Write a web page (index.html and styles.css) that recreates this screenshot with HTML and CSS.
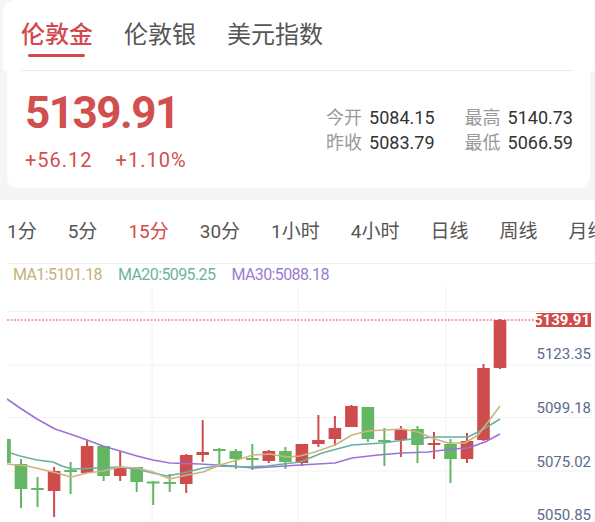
FILE: index.html
```html
<!DOCTYPE html>
<html lang="zh-CN">
<head>
    <meta charset="UTF-8">
    <meta name="viewport" content="width=device-width, initial-scale=1.0">
    <title>伦敦金行情</title>
    <link rel="stylesheet" href="styles.css">
</head>
<body>
    <nav class="market-tabs">
        <div class="market-tabs-inner">
            <a class="market-tab active">伦敦金</a>
            <a class="market-tab">伦敦银</a>
            <a class="market-tab">美元指数</a>
        </div>
    </nav>

    <section class="quote-card">
        <div class="quote-main">
            <div class="price">5139.91</div>
            <div class="change">
                <span>+56.12</span>
                <span>+1.10%</span>
            </div>
        </div>
        <div class="quote-stats">
            <div class="stat"><span class="stat-label">今开</span><span class="stat-value">5084.15</span></div>
            <div class="stat"><span class="stat-label">最高</span><span class="stat-value">5140.73</span></div>
            <div class="stat"><span class="stat-label">昨收</span><span class="stat-value">5083.79</span></div>
            <div class="stat"><span class="stat-label">最低</span><span class="stat-value">5066.59</span></div>
        </div>
    </section>

    <section class="chart-panel">
        <div class="period-tabs">
            <span class="period">1分</span>
            <span class="period">5分</span>
            <span class="period active">15分</span>
            <span class="period">30分</span>
            <span class="period">1小时</span>
            <span class="period">4小时</span>
            <span class="period">日线</span>
            <span class="period">周线</span>
            <span class="period">月线</span>
        </div>
        <div class="ma-legend">
            <span class="ma1">MA1:5101.18</span>
            <span class="ma20">MA20:5095.25</span>
            <span class="ma30">MA30:5088.18</span>
        </div>

        <svg class="kline" width="595" height="237" viewBox="0 285 595 237">
            <defs>
                <clipPath id="plot">
                    <rect x="7" y="285" width="588" height="237"/>
                </clipPath>
            </defs>

            <!-- grid -->
            <g class="grid">
                <line x1="152" y1="285" x2="152" y2="522"/>
                <line x1="298" y1="285" x2="298" y2="522"/>
                <line x1="446" y1="285" x2="446" y2="522"/>
                <line x1="7" y1="311.5" x2="592" y2="311.5"/>
                <line x1="7" y1="365" x2="592" y2="365"/>
                <line x1="7" y1="417.5" x2="592" y2="417.5"/>
                <line x1="7" y1="471" x2="592" y2="471"/>
            </g>

            <!-- candles: wick line + body rect -->
            <g clip-path="url(#plot)">
                <g class="down">
                    <rect x="-1.8" y="439" width="12.6" height="24"/>
                    <line x1="21" y1="459" x2="21" y2="508"/><rect x="14.7" y="464" width="12.6" height="25"/>
                    <line x1="37.5" y1="477" x2="37.5" y2="507"/><rect x="31.2" y="488" width="12.6" height="2"/>
                    <line x1="70.6" y1="462" x2="70.6" y2="494"/><rect x="64.3" y="470" width="12.6" height="2"/>
                    <line x1="103.6" y1="446" x2="103.6" y2="481"/><rect x="97.3" y="446" width="12.6" height="30"/>
                    <line x1="136.7" y1="467" x2="136.7" y2="492"/><rect x="130.4" y="467" width="12.6" height="15"/>
                    <line x1="153.2" y1="481" x2="153.2" y2="505"/><rect x="146.9" y="481.5" width="12.6" height="2"/>
                    <line x1="169.7" y1="474" x2="169.7" y2="492"/><rect x="163.4" y="482" width="12.6" height="2"/>
                    <line x1="219.3" y1="448" x2="219.3" y2="464"/><rect x="213" y="449" width="12.6" height="2"/>
                    <line x1="235.8" y1="449" x2="235.8" y2="469"/><rect x="229.5" y="451" width="12.6" height="8"/>
                    <line x1="252.3" y1="444" x2="252.3" y2="470"/><rect x="246" y="458" width="12.6" height="2"/>
                    <line x1="285.4" y1="447" x2="285.4" y2="469"/><rect x="279.1" y="451" width="12.6" height="11"/>
                    <line x1="367.9" y1="407" x2="367.9" y2="442"/><rect x="361.6" y="407" width="12.6" height="32"/>
                    <line x1="384.4" y1="428" x2="384.4" y2="466"/><rect x="378.1" y="440" width="12.6" height="2"/>
                    <line x1="417.5" y1="426" x2="417.5" y2="463"/><rect x="411.2" y="429" width="12.6" height="16"/>
                    <line x1="450.5" y1="439" x2="450.5" y2="483"/><rect x="444.2" y="444" width="12.6" height="15"/>
                </g>
                <g class="up">
                    <line x1="54.1" y1="467" x2="54.1" y2="517"/><rect x="47.8" y="471" width="12.6" height="20"/>
                    <line x1="87.1" y1="440" x2="87.1" y2="473"/><rect x="80.8" y="446" width="12.6" height="27"/>
                    <line x1="120.2" y1="451" x2="120.2" y2="481"/><rect x="113.9" y="467" width="12.6" height="9"/>
                    <line x1="186.2" y1="454" x2="186.2" y2="493"/><rect x="179.9" y="455" width="12.6" height="29"/>
                    <line x1="202.7" y1="420" x2="202.7" y2="462"/><rect x="196.4" y="452" width="12.6" height="3"/>
                    <line x1="268.8" y1="450" x2="268.8" y2="463"/><rect x="262.5" y="451" width="12.6" height="10"/>
                    <line x1="301.9" y1="444" x2="301.9" y2="466"/><rect x="295.6" y="444" width="12.6" height="19"/>
                    <line x1="318.4" y1="415" x2="318.4" y2="447"/><rect x="312.1" y="440" width="12.6" height="4"/>
                    <line x1="334.9" y1="416" x2="334.9" y2="446"/><rect x="328.6" y="428" width="12.6" height="11"/>
                    <line x1="351.4" y1="405" x2="351.4" y2="427"/><rect x="345.1" y="406" width="12.6" height="21"/>
                    <line x1="400.9" y1="426" x2="400.9" y2="457"/><rect x="394.6" y="430" width="12.6" height="10"/>
                    <line x1="434" y1="432" x2="434" y2="459"/><rect x="427.7" y="443" width="12.6" height="2"/>
                    <line x1="467" y1="433" x2="467" y2="463"/><rect x="460.7" y="441" width="12.6" height="18"/>
                    <line x1="483.5" y1="364" x2="483.5" y2="441"/><rect x="477.2" y="368" width="12.6" height="72"/>
                    <line x1="500" y1="319" x2="500" y2="369"/><rect x="493.7" y="320" width="12.6" height="48"/>
                </g>

                <!-- moving averages -->
                <polyline class="line-ma30" points="7,399 20,408 37,419 55,429 70,434 87,440 103,446 120,451 137,456 153,460 170,463 200,464 233,466 253,468 270,467 300,465 335,463 352,458 378,455 402,453 428,452 452,449 468,448 485,442 500,434"/>
                <polyline class="line-ma20" points="7,452 20,456 37,460 53,462 62,466 72,469 100,468 120,467 140,470 153,473 167,476 183,473 203,468 220,466 247,467 267,466 300,462 322,453 352,445 382,443 412,439 435,437 468,437 482,430 500,419"/>
                <polyline class="line-ma1" points="7,464 27,466 53,472 71,477 87,473 103,471 120,467 137,468 153,472 170,479 187,475 203,472 220,465 237,460 253,455 270,454 287,457 300,456 315,452 335,445 352,435 368,431 385,430 402,429 418,432 432,438 448,443 465,443 478,435 488,422 500,406"/>
            </g>

            <!-- last price -->
            <line class="last-line" x1="7" y1="320" x2="536" y2="320"/>
            <rect class="last-badge" x="536" y="313" width="55" height="14"/>
            <text class="last-text" x="590" y="325">5139.91</text>

            <g class="axis">
                <text x="591" y="359">5123.35</text>
                <text x="591" y="413">5099.18</text>
                <text x="591" y="467">5075.02</text>
                <text x="591" y="520">5050.85</text>
            </g>
        </svg>
    </section>
</body>
</html>
```

FILE: styles.css
```css
body {
    margin: 0;
    width: 595px;
    height: 522px;
    overflow: hidden;
    background-color: #f5f5f5;
    font-family: Roboto, "Noto Sans CJK SC", sans-serif;
    color: #333;
}

/* market switcher */
.market-tabs {
    background: #fff;
    margin-left: 3px;
    height: 71px;
    border-top-left-radius: 12px;
}
.market-tabs-inner {
    display: flex;
    gap: 31px;
    height: 70px;
    margin: 0 22px 0 18px;
    border-bottom: 1px solid #ebebeb;
}
.market-tab {
    position: relative;
    padding-top: 19px;
    font-size: 24px;
    line-height: 32px;
    color: #555;
}
.market-tab.active {
    color: #d4494c;
    font-weight: 500;
}
.market-tab.active::after {
    content: "";
    position: absolute;
    top: 54px;
    left: 50%;
    width: 57px;
    height: 3px;
    margin-left: -29px;
    border-radius: 2px;
    background: #d4494c;
}

/* quote card */
.quote-card {
    display: flex;
    justify-content: space-between;
    align-items: center;
    height: 117px;
    margin: 0 5px 0 7px;
    padding: 0 17px 0 18px;
    box-sizing: border-box;
    background: #fff;
    border-radius: 0 0 12px 12px;
}
.price {
    font-size: 44px;
    font-weight: 700;
    line-height: 52px;
    letter-spacing: -1.5px;
    color: #d14f4f;
}
.change {
    display: flex;
    gap: 23px;
    margin-top: 9px;
    font-size: 20px;
    line-height: 24px;
    letter-spacing: 1px;
    color: #d14f4f;
}
.quote-stats {
    display: grid;
    grid-template-columns: auto auto;
    column-gap: 30px;
    font-size: 18px;
    line-height: 25px;
}
.stat-label {
    color: #999;
    margin-right: 7px;
}
.stat-value {
    color: #333;
}

/* chart panel */
.chart-panel {
    margin-top: 12px;
    height: 322px;
    background: #fff;
}
.period-tabs {
    display: flex;
    align-items: center;
    gap: 31px;
    height: 64px;
    padding-bottom: 5px;
    box-sizing: border-box;
    margin-left: 7px;
    white-space: nowrap;
    overflow: hidden;
    border-bottom: 1px solid #f0f0f0;
    font-size: 19px;
    color: #555;
}
.period.active {
    color: #d4494c;
}
.ma-legend {
    display: flex;
    gap: 16px;
    padding-left: 13px;
    height: 21px;
    font-size: 16px;
    line-height: 21px;
    letter-spacing: -0.6px;
}
.ma1 { color: #c6b27c; }
.ma20 { color: #6db3a4; }
.ma30 { color: #9b7dd2; }

.kline {
    display: block;
}
.grid line {
    stroke: #f2f2f2;
    stroke-width: 1;
}
.down rect { fill: #63b763; }
.down line { stroke: #63b763; stroke-width: 2; }
.up rect { fill: #cf4c4c; }
.up line { stroke: #cf4c4c; stroke-width: 2; }
.kline polyline {
    fill: none;
    stroke-width: 1.6;
    stroke-linejoin: round;
}
.line-ma1 { stroke: #cdb582; }
.line-ma20 { stroke: #6aae9f; }
.line-ma30 { stroke: #9b72d6; }
.last-line {
    stroke: #e04848;
    stroke-width: 1;
    stroke-dasharray: 2 1.5;
}
.last-badge { fill: #d24b4b; }
.last-text {
    fill: #fff;
    font-size: 15px;
    font-weight: 700;
    text-anchor: end;
}
.axis text {
    fill: #5b6b8b;
    font-size: 15px;
    text-anchor: end;
}
```
